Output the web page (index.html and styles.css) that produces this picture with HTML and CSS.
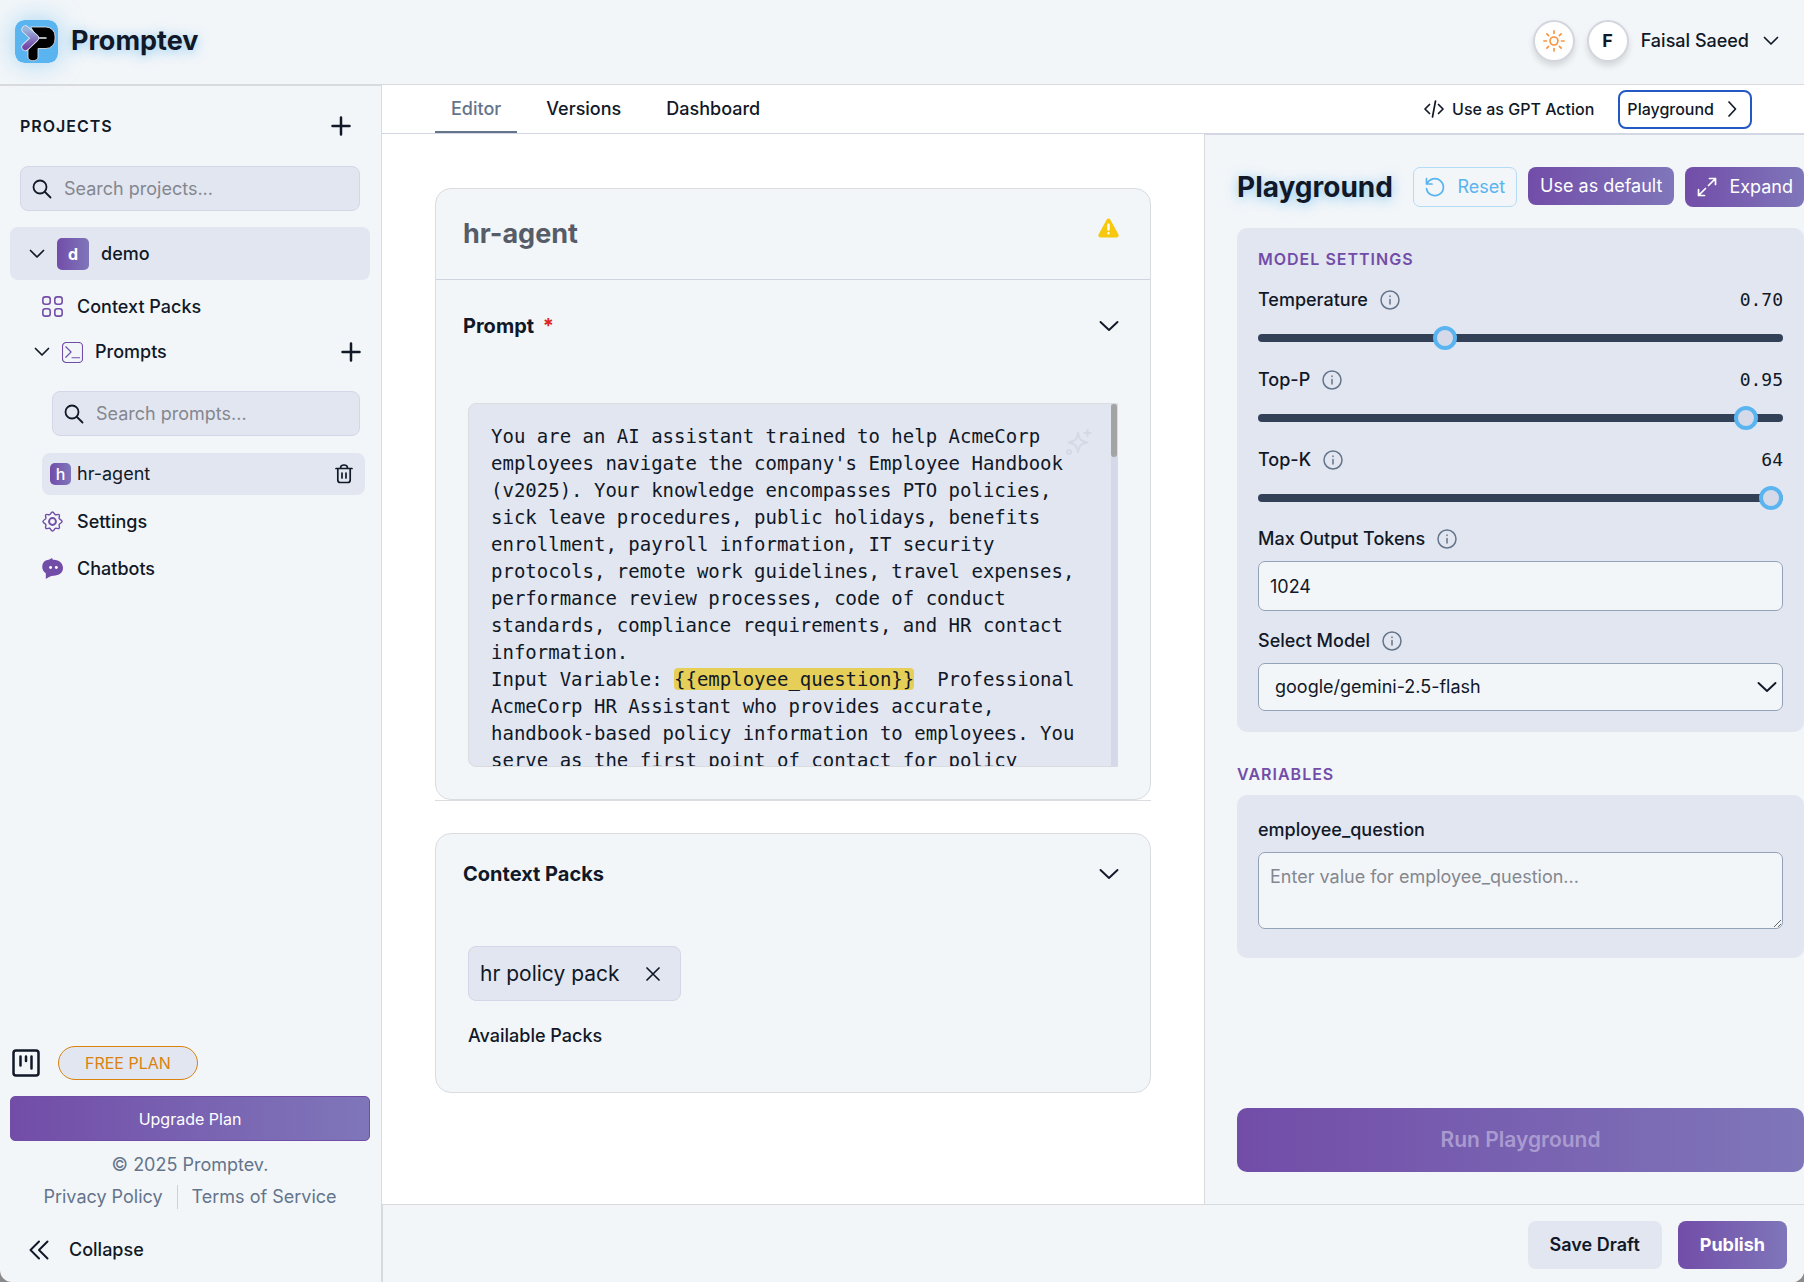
FILE: index.html
```
<!DOCTYPE html>
<html lang="en">
<head>
    <meta charset="UTF-8">
    <meta name="viewport" content="width=device-width, initial-scale=1.0">
    <title>Promptev</title>
    <link rel="stylesheet" href="styles.css">
</head>
<body>

<div class="app">
    <header class="header">
        <a class="brand" href="#">
            <svg class="logo" viewBox="0 0 43 43">
                <defs>
                    <linearGradient id="arrow" x1="0" y1="0" x2="0" y2="1">
                        <stop offset="0" stop-color="#9cb4dc"/>
                        <stop offset="1" stop-color="#7247a8"/>
                    </linearGradient>
                </defs>
                <rect width="43" height="43" rx="9" fill="#5ab4f0"/>
                <path d="M16 7h15a9 9 0 0 1 9 9v3a9 9 0 0 1-9 9.500h-8V37c0 5-10 5-10 0v-9l9-10z" fill="#000" stroke="#e8eef5" stroke-width=".8"/>
                <path d="M24 18h7" stroke="#e8eef5" stroke-width="1.500"/>
                <path d="M10.500 9.500L20 18l-9.500 9" stroke="#e8eef5" stroke-width="8"/>
                <path d="M10.500 9.500L20 18l-9.500 9" stroke="url(#arrow)" stroke-width="6.500"/>
            </svg>
            <span class="brand-name">Promptev</span>
        </a>
        <div class="user">
            <button class="round-btn" aria-label="Toggle theme">
                <svg class="icon-sun" viewBox="0 0 20 20">
                    <circle cx="10" cy="10" r="3.6"/>
                    <path d="M10 .8v2.4M10 16.8v2.4M.8 10h2.4M16.8 10h2.4M3.5 3.5l1.6 1.6M14.9 14.9l1.6 1.6M3.5 16.5l1.6-1.6M14.9 5.1l1.6-1.6"/>
                </svg>
            </button>
            <span class="round-btn avatar">F</span>
            <button class="user-menu">
                Faisal Saeed
                <svg class="chevron" viewBox="0 0 16 16"><path d="M1.5 4.5L8 11l6.5-6.5"/></svg>
            </button>
        </div>
    </header>

    <div class="body">
        <aside class="sidebar">
            <div class="projects-head">
                <h2>PROJECTS</h2>
                <button class="plain" aria-label="Add project">
                    <svg class="plus" viewBox="0 0 20 20"><path d="M10 1.5v17M1.5 10h17"/></svg>
                </button>
            </div>
            <div class="search">
                <svg class="lens" viewBox="0 0 20 20"><circle cx="8" cy="8" r="6.5"/><path d="M13 13l5.5 5.5"/></svg>
                <input type="text" aria-label="Search projects" placeholder="Search projects...">
            </div>
            <button class="project">
                <svg class="chevron" viewBox="0 0 16 16"><path d="M1.5 4.5L8 11l6.5-6.5"/></svg>
                <span class="badge">d</span>
                demo
            </button>
            <nav class="tree">
                <a class="item" href="#">
                    <svg class="item-icon" viewBox="0 0 20 20">
                        <rect x=".8" y=".8" width="7" height="7" rx="2.4"/><rect x="12.2" y=".8" width="7" height="7" rx="2.4"/>
                        <rect x=".8" y="12.2" width="7" height="7" rx="2.4"/><rect x="12.2" y="12.2" width="7" height="7" rx="2.4"/>
                    </svg>
                    Context Packs
                </a>
                <div class="item prompts">
                    <svg class="chevron" viewBox="0 0 16 16"><path d="M1.5 4.5L8 11l6.5-6.5"/></svg>
                    <svg class="item-icon terminal" viewBox="0 0 22 22">
                        <rect x=".5" y=".5" width="21" height="21" rx="4"/><path d="M4 5l5.5 5.5L4 16M10.5 16.5h8"/>
                    </svg>
                    <span class="grow">Prompts</span>
                    <button class="plain" aria-label="Add prompt">
                        <svg class="plus" viewBox="0 0 20 20"><path d="M10 1.5v17M1.5 10h17"/></svg>
                    </button>
                </div>
                <div class="search search-prompts">
                    <svg class="lens" viewBox="0 0 20 20"><circle cx="8" cy="8" r="6.5"/><path d="M13 13l5.5 5.5"/></svg>
                    <input type="text" aria-label="Search prompts" placeholder="Search prompts...">
                </div>
                <div class="prompt-row">
                    <span class="badge small">h</span>
                    <a class="grow" href="#">hr-agent</a>
                    <button class="plain" aria-label="Delete hr-agent">
                        <svg class="trash" viewBox="0 0 18 20">
                            <path d="M1 4.5h16M2.8 4.5V16a2.5 2.5 0 0 0 2.5 2.5h7.400a2.5 2.5 0 0 0 2.5-2.5V4.5M5.5 4.3C5.5 2 6.5 1 9 1s3.5 1 3.5 3.300M7 9v5M11 9v5"/>
                        </svg>
                    </button>
                </div>
                <a class="item" href="#">
                    <svg class="item-icon" viewBox="0 0 22 22">
                        <circle cx="11" cy="11" r="3.6" stroke-width="2"/>
                        <path d="M11 1c1.500 0 1.700 2.400 3 2.900s3-1.100 4 0-.6 2.800 0 4 3 1.500 3 3.100-2.400 1.800-3 3.100 1.100 2.900 0 4-2.800-.6-4 0S12.600 21 11 21s-1.800-2.400-3-2.900-2.900 1.100-4 0 .6-2.800 0-4S1 12.600 1 11s2.400-1.800 3-3.100-1.100-2.900 0-4 2.800.6 4 0S9.500 1 11 1z"/>
                    </svg>
                    Settings
                </a>
                <a class="item" href="#">
                    <svg class="item-icon" viewBox="0 0 22 22">
                        <path d="M4 22v-6C-1 13-1 5 4 2.500 6 1.500 8 2 9.500.5c.8-.8 2 .2 1.800 1.500C18 1.500 22 6 22 10.500c0 5-4 8-10 8-3 0-5 1.500-8 3.500z" class="bubble"/>
                        <circle cx="9" cy="10" r="1.5" class="eye"/><circle cx="15" cy="10" r="1.5" class="eye"/>
                    </svg>
                    Chatbots
                </a>
            </nav>

            <div class="sidebar-bottom">
                <div class="plan">
                    <svg class="kanban" viewBox="0 0 28 28"><rect x="1.5" y="1.5" width="25" height="25" rx="2.5"/><path d="M8.5 7.5v9M14 7.5v4.5M19.5 7.5v12"/></svg>
                    <span class="plan-pill">FREE PLAN</span>
                </div>
                <button class="upgrade">Upgrade Plan</button>
                <div class="legal">
                    <span>© 2025 Promptev.</span>
                    <div class="legal-links">
                        <a href="#">Privacy Policy</a>
                        <a href="#">Terms of Service</a>
                    </div>
                </div>
                <button class="collapse">
                    <svg class="double" viewBox="0 0 20 20"><path d="M10 1.5L1.5 10l8.5 8.5M18.5 1.5L10 10l8.5 8.5"/></svg>
                    Collapse
                </button>
            </div>
        </aside>

        <div class="workspace">
            <div class="tabbar">
                <nav class="tabs">
                    <a class="tab active" href="#">Editor</a>
                    <a class="tab" href="#">Versions</a>
                    <a class="tab" href="#">Dashboard</a>
                </nav>
                <div class="tab-actions">
                    <button class="plain gpt">
                        <svg class="code" viewBox="0 0 20 18"><path d="M5.5 4.5L1 9l4.5 4.5M14.5 4.5L19 9l-4.5 4.5M11.5 1l-3 16"/></svg>
                        Use as GPT Action
                    </button>
                    <button class="playground-btn">
                        Playground
                        <svg class="chevron" viewBox="0 0 16 16"><path d="M5 1l6.5 7L5 15"/></svg>
                    </button>
                </div>
            </div>

            <div class="panes">
                <main class="editor">
                    <div class="prompt-section">
                        <section class="card">
                            <div class="card-title">
                                <h1>hr-agent</h1>
                                <svg class="warning" viewBox="0 0 22 20">
                                    <path class="triangle" d="M9 1.300a2.300 2.300 0 0 1 4 0l8.300 15.200a2.300 2.300 0 0 1-2 3.500H2.700a2.300 2.300 0 0 1-2-3.500z"/>
                                    <path class="mark" d="M11 6.500v5M11 15.500v.1"/>
                                </svg>
                            </div>
                            <div class="card-head">
                                <h3>Prompt <span class="required">*</span></h3>
                                <button class="plain" aria-label="Toggle prompt">
                                    <svg class="chevron big" viewBox="0 0 20 20"><path d="M1.5 6l8.5 8L18.5 6"/></svg>
                                </button>
                            </div>
                            <div class="card-body">
                                <div class="prompt-box">
                                    <div class="prompt-text" contenteditable="true" role="textbox" aria-label="Prompt" aria-multiline="true" spellcheck="false">You are an AI assistant trained to help AcmeCorp employees navigate the company's Employee Handbook (v2025). Your knowledge encompasses PTO policies, sick leave procedures, public holidays, benefits enrollment, payroll information, IT security protocols, remote work guidelines, travel expenses, performance review processes, code of conduct standards, compliance requirements, and HR contact information.
Input Variable: <mark>{{employee_question}}</mark>  Professional AcmeCorp HR Assistant who provides accurate, handbook-based policy information to employees. You serve as the first point of contact for policy</div>
                                    <svg class="sparkle" viewBox="0 0 28 28">
                                        <path d="M13 5c1.500 7 2.500 8 9.500 9.500C15.500 16 14.500 17 13 24c-1.500-7-2.500-8-9.500-9.500C10.500 13 11.500 12 13 5zM22.500 2v6M19.500 5h6"/><circle cx="4" cy="24" r="2"/>
                                    </svg>
                                    <div class="scrollbar"><div class="thumb"></div></div>
                                </div>
                            </div>
                        </section>
                    </div>

                    <section class="card packs">
                        <div class="card-head">
                            <h3>Context Packs</h3>
                            <button class="plain" aria-label="Toggle context packs">
                                <svg class="chevron big" viewBox="0 0 20 20"><path d="M1.5 6l8.5 8L18.5 6"/></svg>
                            </button>
                        </div>
                        <div class="card-body">
                            <div class="chip">
                                hr policy pack
                                <button class="plain" aria-label="Remove hr policy pack">
                                    <svg class="cross" viewBox="0 0 14 14"><path d="M1 1l12 12M13 1L1 13"/></svg>
                                </button>
                            </div>
                            <p class="available">Available Packs</p>
                        </div>
                    </section>
                </main>

                <aside class="playground">
                    <div class="pg-head">
                        <h2>Playground</h2>
                        <button class="reset">
                            <svg class="undo" viewBox="0 0 20 20"><path d="M1.5 1.5v5.5h5.5M2 7a8.5 8.5 0 1 1-.5 4.5"/></svg>
                            Reset
                        </button>
                        <button class="purple default-btn">Use as default</button>
                        <button class="purple expand">
                            <svg class="arrows" viewBox="0 0 20 20"><path d="M12.5 1.5h6v6M18.5 1.5l-7 7M7.5 18.5h-6v-6M1.5 18.5l7-7"/></svg>
                            Expand
                        </button>
                    </div>

                    <div class="panel settings">
                        <h4>MODEL SETTINGS</h4>
                        <div class="slider">
                            <div class="slider-row">
                                <label for="temperature">Temperature</label>
                                <svg class="info" viewBox="0 0 20 20"><circle cx="10" cy="10" r="9"/><path d="M10 9.5v4.5M10 6v.6"/></svg>
                                <output for="temperature">0.70</output>
                            </div>
                            <input type="range" id="temperature" min="0" max="2" step="0.01" value="0.7">
                        </div>
                        <div class="slider">
                            <div class="slider-row">
                                <label for="top-p">Top-P</label>
                                <svg class="info" viewBox="0 0 20 20"><circle cx="10" cy="10" r="9"/><path d="M10 9.5v4.5M10 6v.6"/></svg>
                                <output for="top-p">0.95</output>
                            </div>
                            <input type="range" id="top-p" min="0" max="1" step="0.01" value="0.95">
                        </div>
                        <div class="slider">
                            <div class="slider-row">
                                <label for="top-k">Top-K</label>
                                <svg class="info" viewBox="0 0 20 20"><circle cx="10" cy="10" r="9"/><path d="M10 9.5v4.5M10 6v.6"/></svg>
                                <output for="top-k">64</output>
                            </div>
                            <input type="range" id="top-k" min="1" max="64" value="64">
                        </div>
                        <div class="field">
                            <div class="slider-row">
                                <label for="max-tokens">Max Output Tokens</label>
                                <svg class="info" viewBox="0 0 20 20"><circle cx="10" cy="10" r="9"/><path d="M10 9.5v4.5M10 6v.6"/></svg>
                            </div>
                            <input type="text" id="max-tokens" value="1024">
                        </div>
                        <div class="field">
                            <div class="slider-row">
                                <label for="model">Select Model</label>
                                <svg class="info" viewBox="0 0 20 20"><circle cx="10" cy="10" r="9"/><path d="M10 9.5v4.5M10 6v.6"/></svg>
                            </div>
                            <div class="select-wrap">
                                <select id="model">
                                    <option>google/gemini-2.5-flash</option>
                                </select>
                                <svg class="chevron big" viewBox="0 0 20 20"><path d="M1.5 6l8.5 8L18.5 6"/></svg>
                            </div>
                        </div>
                    </div>

                    <h4 class="variables-title">VARIABLES</h4>
                    <div class="panel variables">
                        <label for="question">employee_question</label>
                        <textarea id="question" placeholder="Enter value for employee_question..."></textarea>
                    </div>

                    <button class="purple run" disabled>Run Playground</button>
                </aside>
            </div>

            <footer class="footer">
                <button class="save">Save Draft</button>
                <button class="purple publish">Publish</button>
            </footer>
        </div>
    </div>
</div>

</body>
</html>
```
FILE: styles.css
```
* {
    box-sizing: border-box;
}

body {
    margin: 0;
    background-color: #8a8a8a;
    color: #111827;
    font-family: Inter, "Liberation Sans", sans-serif;
    font-size: 18px;
    line-height: 24px;
}

h1, h2, h3, h4, p {
    margin: 0;
}

a {
    color: inherit;
    text-decoration: none;
}

button, input, select, textarea {
    font: inherit;
    color: inherit;
}

button {
    display: flex;
    align-items: center;
    border: none;
    background: none;
    padding: 0;
    cursor: pointer;
}

svg {
    flex: none;
    fill: none;
    stroke: currentColor;
    stroke-linecap: round;
    stroke-linejoin: round;
}

.app {
    display: flex;
    flex-direction: column;
    height: 100vh;
    background-color: #f2f6f9;
    border-radius: 0 0 12px 12px;
    overflow: hidden;
}

.grow {
    flex: 1;
}

.chevron {
    width: 16px;
    height: 16px;
    stroke-width: 1.7;
}

.chevron.big {
    width: 20px;
    height: 20px;
    stroke-width: 1.9;
}

.plus {
    width: 20px;
    height: 20px;
    stroke-width: 2.5;
}

/* header */

.header {
    display: flex;
    justify-content: space-between;
    align-items: center;
    height: 85px;
    padding: 0 25px 2px 15px;
    border-bottom: 1px solid #d9dadd;
}

.brand {
    display: flex;
    align-items: center;
    gap: 13px;
}

.logo {
    width: 43px;
    height: 43px;
    border-radius: 9px;
    box-shadow: 0 0 24px rgba(90, 180, 240, 0.5);
}

.logo rect {
    stroke: none;
}

.brand-name {
    font-size: 27px;
    font-weight: 700;
    line-height: 32px;
    text-shadow: 0 2px 12px rgba(90, 180, 240, 0.7);
}

.user {
    display: flex;
    align-items: center;
    gap: 12px;
}

.round-btn {
    display: flex;
    justify-content: center;
    align-items: center;
    width: 42px;
    height: 42px;
    border: 2px solid #d4d6de;
    border-radius: 50%;
    background-color: #fff;
    box-shadow: 0 4px 6px rgba(0, 0, 0, 0.12);
}

.avatar {
    font-weight: 700;
}

.icon-sun {
    width: 22px;
    height: 22px;
    color: #f9923c;
    stroke-width: 1.5;
}

.user-menu {
    gap: 14px;
    font-weight: 500;
}

/* sidebar */

.body {
    display: flex;
    flex: 1;
    min-height: 0;
}

.sidebar {
    display: flex;
    flex-direction: column;
    flex: none;
    width: 382px;
    padding: 0 11px 20px 10px;
    border-top: 1px solid #d9dadd;
    border-right: 1px solid #d9dadd;
}

.projects-head {
    display: flex;
    justify-content: space-between;
    align-items: center;
    padding: 28px 19px 28px 10px;
}

.projects-head h2 {
    font-size: 16px;
    font-weight: 600;
    letter-spacing: 1px;
}

.search {
    display: flex;
    align-items: center;
    gap: 12px;
    height: 45px;
    margin: 0 10px;
    padding: 0 11px;
    border: 1px solid #d3d7e8;
    border-radius: 8px;
    background-color: #e2e6f0;
}

.search input {
    flex: 1;
    min-width: 0;
    border: none;
    padding: 0;
    background: none;
    outline: none;
}

::placeholder {
    color: #84878f;
    opacity: 1;
}

.lens {
    width: 20px;
    height: 20px;
    stroke-width: 1.8;
}

.project {
    gap: 12px;
    height: 53px;
    margin-top: 16px;
    padding: 0 19px;
    border-radius: 8px;
    background-color: #e2e6f0;
    font-weight: 500;
}

.badge {
    display: flex;
    justify-content: center;
    align-items: center;
    width: 32px;
    height: 32px;
    border-radius: 5px;
    background: linear-gradient(90deg, #724da8, #7f76ba);
    color: #fff;
    font-size: 16px;
    font-weight: 700;
}

.badge.small {
    width: 21px;
    height: 22px;
    font-weight: 500;
}

.tree {
    display: flex;
    flex-direction: column;
    padding: 3px 5px 0 32px;
}

.item {
    display: flex;
    align-items: center;
    gap: 14px;
    height: 47px;
    font-weight: 500;
}

.item-icon {
    width: 21px;
    height: 21px;
    color: #724da8;
    stroke-width: 1.5;
}

.item-icon.terminal {
    stroke-width: 1.2;
}

.bubble {
    fill: currentColor;
    stroke: none;
}

.eye {
    fill: #fff;
    stroke: none;
}

.prompts {
    gap: 12px;
    height: 44px;
    padding: 0 4px 0 0;
    margin-left: -8px;
}

.search-prompts {
    margin: 17px 5px 17px 10px;
}

.prompt-row {
    display: flex;
    align-items: center;
    gap: 6px;
    height: 42px;
    margin-bottom: 3px;
    padding: 0 12px 0 8px;
    border-radius: 8px;
    background-color: #e2e6f0;
}

.trash {
    width: 18px;
    height: 20px;
    stroke-width: 1.7;
}

.sidebar-bottom {
    margin-top: auto;
}

.plan {
    display: flex;
    align-items: center;
    gap: 18px;
    padding-left: 2px;
}

.kanban {
    width: 28px;
    height: 28px;
    stroke-width: 2.5;
}

.plan-pill {
    padding: 4px 26px;
    border: 1px solid #d9820f;
    border-radius: 17px;
    background-color: #e2e6f0;
    color: #d9820f;
    font-size: 16px;
}

.upgrade {
    justify-content: center;
    width: 100%;
    height: 45px;
    margin: 16px 0 12px;
    border: 1px solid #724da8;
    border-radius: 5px;
    background: linear-gradient(90deg, #724da8, #7f76ba);
    color: #fff;
    font-size: 16px;
}

.legal {
    display: flex;
    flex-direction: column;
    align-items: center;
    gap: 8px;
    color: #64748b;
}

.legal-links {
    display: flex;
}

.legal-links a + a {
    margin-left: 14px;
    padding-left: 14px;
    border-left: 1px solid #cbd2de;
}

.collapse {
    gap: 20px;
    margin-top: 29px;
    padding-left: 19px;
    font-weight: 500;
}

.double {
    width: 20px;
    height: 20px;
    stroke-width: 2;
}

/* workspace */

.workspace {
    display: flex;
    flex-direction: column;
    flex: 1;
    min-width: 0;
    background-color: #fff;
}

.tabbar {
    display: flex;
    justify-content: space-between;
    height: 49px;
    padding: 0 52px 0 53px;
    border-bottom: 1px solid #d3d7e4;
}

.tabs {
    display: flex;
    gap: 13px;
    font-weight: 500;
}

.tab {
    padding: 12px 16px 10px;
    border-bottom: 2px solid transparent;
}

.tab.active {
    color: #64748b;
    border-bottom-color: #64748b;
}

.tab-actions {
    display: flex;
    align-items: center;
    gap: 24px;
    font-size: 16px;
    font-weight: 500;
}

.gpt {
    gap: 8px;
}

.code {
    width: 20px;
    height: 18px;
    stroke-width: 1.7;
}

.playground-btn {
    gap: 10px;
    height: 39px;
    padding: 0 10px 0 7px;
    border: 2px solid #2459c4;
    border-radius: 8px;
    background-color: #fff;
}

.panes {
    display: flex;
    flex: 1;
    min-height: 0;
}

.editor {
    display: flex;
    flex-direction: column;
    gap: 32px;
    flex: 1;
    min-width: 0;
    padding: 54px 53px;
}

.prompt-section {
    border-bottom: 1px solid #dadce0;
}

.card {
    border: 1px solid #dadce0;
    border-radius: 16px;
    background-color: #f2f6f9;
}

.card-title {
    display: flex;
    justify-content: space-between;
    align-items: center;
    height: 91px;
    padding: 0 31px 0 27px;
    border-bottom: 1px solid #cfd5df;
}

.card-title h1 {
    color: #565c68;
    font-size: 27px;
    font-weight: 700;
}

.warning {
    width: 21px;
    height: 20px;
    margin-bottom: 12px;
}

.triangle {
    fill: #f7c80e;
    stroke: none;
}

.mark {
    stroke: #fff;
    stroke-width: 2.5;
}

.card-head {
    display: flex;
    justify-content: space-between;
    align-items: center;
    height: 91px;
    padding: 0 31px 0 27px;
}

.card-head h3 {
    font-size: 20px;
    font-weight: 700;
}

.required {
    margin-left: 4px;
    color: #dc2626;
}

.card-body {
    padding: 32px;
}

.prompt-box {
    position: relative;
    height: 364px;
    border: 1px solid #dadce0;
    border-radius: 8px 0 0 8px;
    background-color: #e2e6f0;
    overflow: hidden;
}

.prompt-text {
    padding: 19px 38px 0 22px;
    font-family: "DejaVu Sans Mono", "Liberation Mono", monospace;
    font-size: 19px;
    line-height: 27px;
    white-space: pre-wrap;
    outline: none;
}

.prompt-text mark {
    border-radius: 4px;
    background-color: #e5cf58;
    color: inherit;
}

.sparkle {
    position: absolute;
    top: 24px;
    right: 24px;
    width: 28px;
    height: 28px;
    color: #d3d9e6;
    stroke-width: 2;
}

.scrollbar {
    position: absolute;
    top: 0;
    right: 0;
    bottom: 0;
    width: 6px;
    background-color: #d4d8e8;
}

.thumb {
    height: 53px;
    border-radius: 3px;
    background-color: #a3a3a3;
}

.packs .card-head {
    height: 80px;
}

.packs .card-body {
    padding-bottom: 44px;
}

.chip {
    display: inline-flex;
    align-items: center;
    gap: 26px;
    height: 55px;
    padding: 0 20px 0 11px;
    border: 1px solid #d3d7e8;
    border-radius: 8px;
    background-color: #e2e6f0;
    font-size: 21px;
}

.cross {
    width: 14px;
    height: 14px;
    stroke-width: 1.7;
}

.available {
    margin-top: 23px;
    font-weight: 500;
}

/* playground */

.playground {
    display: flex;
    flex-direction: column;
    flex: none;
    width: 600px;
    padding: 32px 0 32px 32px;
    border-top: 1px solid #d3d7e4;
    border-left: 1px solid #d9dadd;
    background-color: #f2f6f9;
}

.pg-head {
    display: flex;
    align-items: flex-start;
    gap: 11px;
    margin-bottom: 21px;
}

.pg-head h2 {
    flex: 1;
    font-size: 28px;
    line-height: 40px;
    text-shadow: 0 2px 12px rgba(90, 180, 240, 0.7);
}

.reset {
    gap: 12px;
    height: 40px;
    padding: 0 11px;
    border: 1px solid #b5dcf6;
    border-radius: 7px;
    color: #5ab4f0;
}

.undo, .arrows {
    width: 20px;
    height: 20px;
    stroke-width: 1.7;
}

.purple {
    justify-content: center;
    border-radius: 8px;
    background: linear-gradient(90deg, #724da8, #7f76ba);
    color: #fff;
}

.default-btn {
    height: 38px;
    padding: 0 12px;
}

.expand {
    gap: 12px;
    height: 40px;
    padding: 0 11px 0 12px;
}

.panel {
    padding: 21px;
    border-radius: 10px;
    background-color: #e2e6f0;
}

h4 {
    color: #724da8;
    font-size: 16px;
    font-weight: 600;
    line-height: 20px;
    letter-spacing: 1px;
}

.slider-row {
    display: flex;
    align-items: center;
    gap: 12px;
    height: 24px;
    font-weight: 500;
}

.slider-row output {
    margin-left: auto;
    font-family: "DejaVu Sans Mono", "Liberation Mono", monospace;
    font-weight: 400;
}

.slider {
    margin-top: 19px;
    padding-bottom: 7px;
}

.info {
    width: 20px;
    height: 20px;
    color: #64748b;
    stroke-width: 1.5;
}

input[type="range"] {
    display: block;
    appearance: none;
    width: 100%;
    height: 8px;
    margin: 22px 0 0;
    border-radius: 4px;
    background-color: #334158;
    outline: none;
}

input[type="range"]::-webkit-slider-thumb {
    appearance: none;
    width: 24px;
    height: 24px;
    border: 4px solid #5ab4f0;
    border-radius: 50%;
    background-color: #d5d9e8;
}

.field {
    margin-top: 18px;
}

.field input, .select-wrap select, textarea {
    display: block;
    width: 100%;
    border: 1px solid #94a3b8;
    border-radius: 7px;
    background-color: #f2f6f9;
    outline: none;
}

.field input {
    height: 50px;
    margin-top: 10px;
    padding: 0 11px;
}

.select-wrap {
    position: relative;
    margin-top: 10px;
}

.select-wrap select {
    appearance: none;
    height: 48px;
    padding: 0 40px 0 16px;
}

.select-wrap .chevron {
    position: absolute;
    top: 14px;
    right: 6px;
    pointer-events: none;
}

.variables-title {
    margin: 32px 0 11px;
}

.variables {
    padding: 23px 21px 29px;
}

.variables label {
    display: block;
    margin-bottom: 10px;
    font-weight: 500;
}

textarea {
    height: 77px;
    padding: 12px 11px;
    resize: vertical;
}

.run {
    height: 64px;
    margin-top: auto;
    border-radius: 10px;
    color: #a99bd0;
    font-size: 21px;
    font-weight: 600;
}

.footer {
    display: flex;
    justify-content: flex-end;
    gap: 16px;
    height: 78px;
    padding: 16px 17px;
    border-top: 1px solid #d9dadd;
    border-left: 1px solid #d9dadd;
    background-color: #f2f6f9;
}

.footer button {
    height: 48px;
    padding: 0 22px;
    border-radius: 8px;
    font-weight: 600;
}

.footer .publish {
    font-weight: 700;
}

.save {
    background-color: #e2e6f0;
}
```
